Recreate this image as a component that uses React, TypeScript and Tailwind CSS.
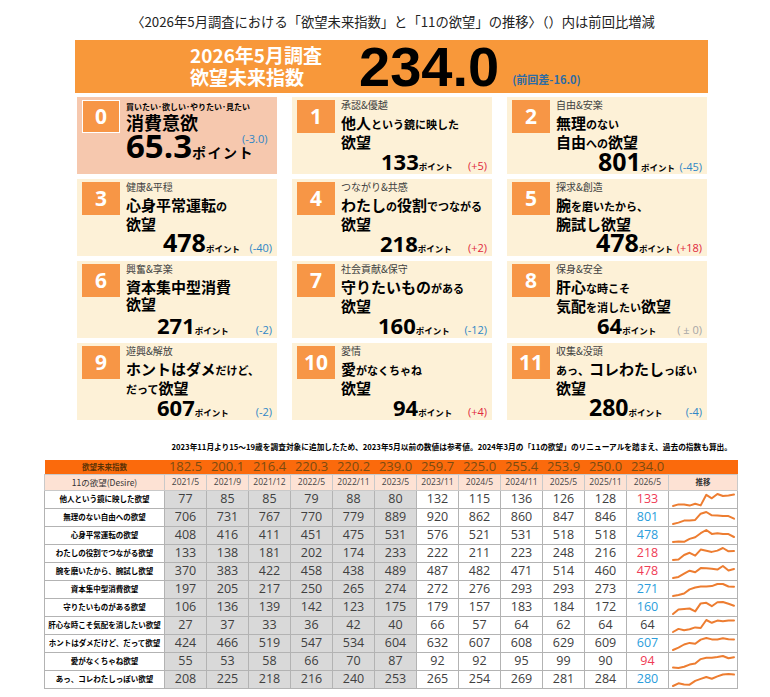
import React from "react";

// [text, big]
type Part = [string, boolean];

type Card = {
  no: string;
  label: string;
  lines: Part[][];
  value: string;
  change: string;
  tone: "red" | "blue" | "gray";
  numPad: string;
  numSize: string;
};

const CARDS: Card[] = [
  {
    no: "1",
    label: "承認&優越",
    lines: [[["他人", true], ["という鏡に映した", false]], [["欲望", true]]],
    value: "133",
    change: "(+5)",
    tone: "red",
    numPad: "pl-[40px]",
    numSize: "text-[22px]",
  },
  {
    no: "2",
    label: "自由&安楽",
    lines: [[["無理", true], ["のない", false]], [["自由", true], ["への", false], ["欲望", true]]],
    value: "801",
    change: "(-45)",
    tone: "blue",
    numPad: "pl-[42px]",
    numSize: "text-[25px]",
  },
  {
    no: "3",
    label: "健康&平穏",
    lines: [[["心身平常運転", true], ["の", false]], [["欲望", true]]],
    value: "478",
    change: "(-40)",
    tone: "blue",
    numPad: "pl-[37px]",
    numSize: "text-[25px]",
  },
  {
    no: "4",
    label: "つながり&共感",
    lines: [[["わたし", true], ["の", false], ["役割", true], ["でつながる", false]], [["欲望", true]]],
    value: "218",
    change: "(+2)",
    tone: "red",
    numPad: "pl-[39px]",
    numSize: "text-[22px]",
  },
  {
    no: "5",
    label: "探求&創造",
    lines: [[["腕", true], ["を磨いたから、", false]], [["腕試し欲望", true]]],
    value: "478",
    change: "(+18)",
    tone: "red",
    numPad: "pl-[40px]",
    numSize: "text-[25px]",
  },
  {
    no: "6",
    label: "興奮&享楽",
    lines: [[["資本集中型消費", true]], [["欲望", true]]],
    value: "271",
    change: "(-2)",
    tone: "blue",
    numPad: "pl-[31px]",
    numSize: "text-[22px]",
  },
  {
    no: "7",
    label: "社会貢献&保守",
    lines: [[["守りたいもの", true], ["がある", false]], [["欲望", true]]],
    value: "160",
    change: "(-12)",
    tone: "blue",
    numPad: "pl-[37px]",
    numSize: "text-[22px]",
  },
  {
    no: "8",
    label: "保身&安全",
    lines: [[["肝心", true], ["な時こそ", false]], [["気配", true], ["を消したい", false], ["欲望", true]]],
    value: "64",
    change: "( ± 0)",
    tone: "gray",
    numPad: "pl-[41px]",
    numSize: "text-[22px]",
  },
  {
    no: "9",
    label: "遊興&解放",
    lines: [[["ホントはダメ", true], ["だけど、", false]], [["だって", false], ["欲望", true]]],
    value: "607",
    change: "(-2)",
    tone: "blue",
    numPad: "pl-[31px]",
    numSize: "text-[22px]",
  },
  {
    no: "10",
    label: "愛情",
    lines: [[["愛", true], ["がなくちゃね", false]], [["欲望", true]]],
    value: "94",
    change: "(+4)",
    tone: "red",
    numPad: "pl-[52px]",
    numSize: "text-[22px]",
  },
  {
    no: "11",
    label: "収集&没頭",
    lines: [[["あっ、", false], ["コレわたし", true], ["っぽい", false]], [["欲望", true]]],
    value: "280",
    change: "(-4)",
    tone: "blue",
    numPad: "pl-[33px]",
    numSize: "text-[23px]",
  },
];

const TONE = {
  red: "text-[#e0283c]",
  blue: "text-[#2f86c6]",
  gray: "text-[#a6a6a6]",
};

const INDEX = ["182.5", "200.1", "216.4", "220.3", "220.2", "239.0", "259.7", "225.0", "255.4", "253.9", "250.0", "234.0"];
const DATES = ["2021/5", "2021/9", "2021/12", "2022/5", "2022/11", "2023/5", "2023/11", "2024/5", "2024/11", "2025/5", "2025/11", "2026/5"];

const ROWS: { label: string; values: number[]; tone: "red" | "blue" | "black" }[] = [
  { label: "他人という鏡に映した欲望", values: [77, 85, 85, 79, 88, 80, 132, 115, 136, 126, 128, 133], tone: "red" },
  { label: "無理のない自由への欲望", values: [706, 731, 767, 770, 779, 889, 920, 862, 860, 847, 846, 801], tone: "blue" },
  { label: "心身平常運転の欲望", values: [408, 416, 411, 451, 475, 531, 576, 521, 531, 518, 518, 478], tone: "blue" },
  { label: "わたしの役割でつながる欲望", values: [133, 138, 181, 202, 174, 233, 222, 211, 223, 248, 216, 218], tone: "red" },
  { label: "腕を磨いたから、腕試し欲望", values: [370, 383, 422, 458, 438, 489, 487, 482, 471, 514, 460, 478], tone: "red" },
  { label: "資本集中型消費欲望", values: [197, 205, 217, 250, 265, 274, 272, 276, 293, 293, 273, 271], tone: "blue" },
  { label: "守りたいものがある欲望", values: [106, 136, 139, 142, 123, 175, 179, 157, 183, 184, 172, 160], tone: "blue" },
  { label: "肝心な時こそ気配を消したい欲望", values: [27, 37, 33, 36, 42, 40, 66, 57, 64, 62, 64, 64], tone: "black" },
  { label: "ホントはダメだけど、だって欲望", values: [424, 466, 519, 547, 534, 604, 632, 607, 608, 629, 609, 607], tone: "blue" },
  { label: "愛がなくちゃね欲望", values: [55, 53, 58, 66, 70, 87, 92, 92, 95, 99, 90, 94], tone: "red" },
  { label: "あっ、コレわたしっぽい欲望", values: [208, 225, 218, 216, 240, 253, 265, 254, 269, 281, 284, 280], tone: "blue" },
];

const LAST_TONE = {
  red: "text-[#ef3b55]",
  blue: "text-[#2b9ddb]",
  black: "text-[#404040]",
};

const NUM = "font-['Open_Sans','Noto_Sans_CJK_JP',sans-serif]";

const Spark = ({ values }: { values: number[] }) => {
  const min = Math.min(...values);
  const max = Math.max(...values);
  const pts = values
    .map((v, i) => {
      const x = 4 + (i * 61) / (values.length - 1);
      const y = 15 - ((v - min) / (max - min || 1)) * 12;
      return `${x.toFixed(1)},${y.toFixed(1)}`;
    })
    .join(" ");
  return (
    <svg width="69" height="17" viewBox="0 0 69 17" className="block">
      <polyline points={pts} fill="none" stroke="#ed7d31" strokeWidth="2" strokeLinejoin="round" strokeLinecap="round" />
    </svg>
  );
};

const NumBox = ({ no, first }: { no: string; first?: boolean }) => (
  <div
    className={`ml-[5px] mt-[3px] flex h-[33px] w-[38px] shrink-0 items-center justify-center bg-[#f79646] text-[21px] font-bold leading-none text-white ${NUM} ${
      first ? "border border-white" : ""
    }`}
  >
    {no}
  </div>
);

const DesireCard = ({ card }: { card: Card }) => (
  <div className="flex h-[77px] bg-[#fdf1d7]">
    <NumBox no={card.no} />
    <div className="ml-[6px] flex min-w-0 flex-1 flex-col pt-[1px]">
      <div className="text-[10px] leading-[14px] text-[#404040]">{card.label}</div>
      <div className="mt-[2px] text-black">
        {card.lines.map((line, i) => (
          <div key={i} className="whitespace-nowrap font-bold leading-[17px]">
            {line.map(([t, big], j) => (
              <span key={j} className={big ? "text-[15px]" : "text-[11px]"}>
                {t}
              </span>
            ))}
          </div>
        ))}
      </div>
      <div className={`mt-auto flex items-baseline pb-[2px] pr-[5px] ${card.numPad}`}>
        <span className={`${NUM} ${card.numSize} font-bold leading-[19px] text-black`}>{card.value}</span>
        <span className="text-[8.5px] font-bold leading-[10px] text-black">ポイント</span>
        <span className={`ml-auto text-[11px] leading-[12px] ${NUM} ${TONE[card.tone]}`}>{card.change}</span>
      </div>
    </div>
  </div>
);

const FirstCard = () => (
  <div className="flex h-[77px] bg-[#f6c8ae]">
    <NumBox no="0" first />
    <div className="ml-[6px] flex min-w-0 flex-1 flex-col pt-[4px]">
      <div className="whitespace-nowrap text-[8px] font-bold leading-[12px] text-black">買いたい･欲しい･やりたい･見たい</div>
      <div className="text-[18px] font-bold leading-[18px] text-black">消費意欲</div>
      <div className="flex items-start">
        <div className="flex shrink-0 items-baseline whitespace-nowrap">
          <span className={`${NUM} text-[33px] font-bold leading-[30px] text-black`}>65.3</span>
          <span className="text-[14px] font-bold leading-[16px] tracking-[1.5px] text-black">ポイント</span>
        </div>
        <span className={`-ml-[12px] mt-[2px] shrink-0 text-[11px] leading-[12px] ${NUM} text-[#2f86c6]`}>(-3.0)</span>
      </div>
    </div>
  </div>
);

export default function App() {
  return (
    <div className="w-[770px] bg-white pb-[8px] font-['Noto_Sans_CJK_JP',sans-serif]">
      {/* TITLE */}
      <div className="pl-[16px] pt-[14px] text-center text-[13.3px] leading-[16px] text-[#222]">
        〈2026年5月調査における「欲望未来指数」と「11の欲望」の推移〉（）内は前回比増減
      </div>

      {/* BANNER */}
      <div className="ml-[75px] mt-[10px] flex h-[53px] w-[633px] items-start bg-[#f8983a] pl-[115px]">
        <div className="mt-[4px] text-[19px] font-bold leading-[22px] text-white">
          <div>2026年5月調査</div>
          <div>欲望未来指数</div>
        </div>
        <div className="ml-[37px] font-['Liberation_Sans',sans-serif] text-[56px] font-bold leading-[53px] text-black">234.0</div>
        <div className="ml-[13px] mt-[32px] text-[11px] font-bold leading-[14px] text-[#2e6ca4]">(前回差-16.0)</div>
      </div>

      {/* CARDS */}
      <div className="ml-[77px] mt-[4px] grid w-[630px] grid-cols-3 gap-x-[15px] gap-y-[5px]">
        <FirstCard />
        {CARDS.map((c) => (
          <DesireCard key={c.no} card={c} />
        ))}
      </div>

      {/* TABLE */}
      <div className="ml-[44px] mt-[22px] w-[693px]">
        <div className="whitespace-nowrap pr-[5px] text-right text-[7.7px] font-bold leading-[10px] text-black">
          2023年11月より15～19歳を調査対象に追加したため、2023年5月以前の数値は参考値。2024年3月の「11の欲望」のリニューアルを踏まえ、過去の指数も算出。
        </div>
        <table className="mt-[8px] w-[693px] table-fixed border-collapse">
          <colgroup>
            <col className="w-[120px]" />
            {DATES.map((d) => (
              <col key={d} className="w-[42px]" />
            ))}
            <col className="w-[69px]" />
          </colgroup>
          <tbody>
            <tr className="h-[14px] bg-[#fb6a0c]">
              <td className="p-0 text-center text-[7.5px] font-bold leading-none text-[#5a3205]">欲望未来指数</td>
              {INDEX.map((v, i) => (
                <td key={i} className={`p-0 text-center text-[13px] leading-none text-[#7a4a10] ${NUM}`}>
                  {v}
                </td>
              ))}
              <td className="p-0" />
            </tr>
            <tr className="h-[16px] bg-[#fde2d4]">
              <td className="border border-[#c9c9c9] p-0 text-center text-[8.5px] leading-none text-[#333]">11の欲望(Desire)</td>
              {DATES.map((d) => (
                <td key={d} className={`border border-[#c9c9c9] p-0 text-center text-[8.5px] leading-none text-[#444] ${NUM}`}>
                  {d}
                </td>
              ))}
              <td className="border border-[#c9c9c9] p-0 text-center text-[7.5px] font-bold leading-none text-[#333]">推移</td>
            </tr>
            {ROWS.map((r) => (
              <tr key={r.label} className="h-[18px]">
                <td className="whitespace-nowrap border border-[#b3b3b3] bg-white p-0 text-center text-[7.5px] font-bold leading-none text-black">
                  {r.label}
                </td>
                {r.values.map((v, i) => (
                  <td
                    key={i}
                    className={`border border-[#b3b3b3] p-0 text-center text-[12.5px] leading-none ${NUM} ${
                      i < 6 ? "bg-[#d9d9d9]" : "bg-white"
                    } ${i === 11 ? LAST_TONE[r.tone] : "text-[#404040]"}`}
                  >
                    {v}
                  </td>
                ))}
                <td className="border border-[#b3b3b3] bg-white p-0">
                  <Spark values={r.values} />
                </td>
              </tr>
            ))}
          </tbody>
        </table>
      </div>
    </div>
  );
}
